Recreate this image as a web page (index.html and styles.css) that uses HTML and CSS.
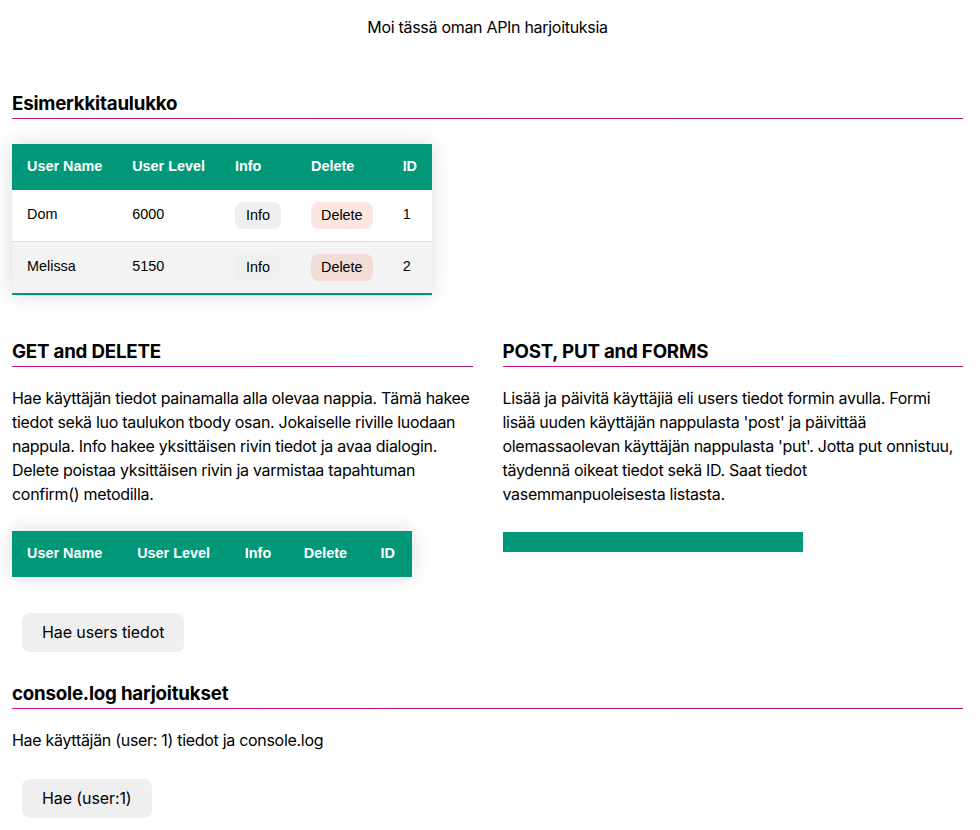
FILE: index.html
```html
<!DOCTYPE html>
<html lang="fi">
<head>
<meta charset="utf-8">
<title>API harjoitukset</title>
<link rel="stylesheet" href="styles.css">
</head>
<body>
<main class="page">
  <header class="intro">
    <p>Moi tässä oman APIn harjoituksia</p>
  </header>

  <section class="block">
    <h3 class="section-title">Esimerkkitaulukko</h3>
    <table class="styled-table">
      <thead>
        <tr><th>User Name</th><th>User Level</th><th>Info</th><th>Delete</th><th>ID</th></tr>
      </thead>
      <tbody>
        <tr>
          <td>Dom</td><td>6000</td>
          <td><button class="btn-small btn-info">Info</button></td>
          <td><button class="btn-small btn-delete">Delete</button></td>
          <td>1</td>
        </tr>
        <tr>
          <td>Melissa</td><td>5150</td>
          <td><button class="btn-small btn-info">Info</button></td>
          <td><button class="btn-small btn-delete">Delete</button></td>
          <td>2</td>
        </tr>
      </tbody>
    </table>
  </section>

  <div class="columns">
    <section class="block">
      <h3 class="section-title">GET and DELETE</h3>
      <p class="text">Hae käyttäjän tiedot painamalla alla olevaa nappia. Tämä hakee tiedot sekä luo taulukon tbody osan. Jokaiselle riville luodaan nappula. Info hakee yksittäisen rivin tiedot ja avaa dialogin. Delete poistaa yksittäisen rivin ja varmistaa tapahtuman confirm() metodilla.</p>
      <table class="styled-table">
        <thead>
          <tr><th>User Name</th><th>User Level</th><th>Info</th><th>Delete</th><th>ID</th></tr>
        </thead>
        <tbody></tbody>
      </table>
      <div class="actions"><button class="btn">Hae users tiedot</button></div>
    </section>
    <section class="block">
      <h3 class="section-title">POST, PUT and FORMS</h3>
      <p class="text">Lisää ja päivitä käyttäjiä eli users tiedot formin avulla. Formi lisää uuden käyttäjän nappulasta 'post' ja päivittää olemassaolevan käyttäjän nappulasta 'put'. Jotta put onnistuu, täydennä oikeat tiedot sekä ID. Saat tiedot vasemmanpuoleisesta listasta.</p>
      <form class="user-form"></form>
    </section>
  </div>

  <section class="block">
    <h3 class="section-title">console.log harjoitukset</h3>
    <p class="text">Hae käyttäjän (user: 1) tiedot ja console.log</p>
    <div class="actions"><button class="btn">Hae (user:1)</button></div>
  </section>
</main>
</body>
</html>
```

FILE: styles.css
```css
* { box-sizing: border-box; }

body {
  margin: 0;
  font-family: Inter, "Liberation Sans", sans-serif;
  font-size: 16px;
  line-height: 1.5;
  letter-spacing: -0.3px;
  color: #000;
  background: #fff;
}

.page {
  margin: 0 17px 0 12px;
  padding-bottom: 20px;
}

.intro {
  text-align: center;
  padding-top: 15px;
  margin-bottom: 51px;
}
.intro p { margin: 0; }

.section-title {
  font-size: 18.72px;
  line-height: 28px;
  font-weight: 700;
  letter-spacing: -0.2px;
  margin: 18.72px 0;
  border-bottom: 1px solid transparent;
  border-image: linear-gradient(90deg, #d0128a, #9c1a6c) 1;
}

.text { margin: 16px 0; }

.columns {
  display: grid;
  grid-template-columns: 1fr 1fr;
  column-gap: 30px;
}

.styled-table {
  border-collapse: collapse;
  margin: 25px 0;
  font-size: 0.9em;
  font-family: "Liberation Sans", Arial, sans-serif;
  letter-spacing: 0;
  min-width: 400px;
  box-shadow: 0 0 20px rgba(0, 0, 0, 0.15);
}
.styled-table thead tr {
  background-color: #009879;
  color: #fff;
  text-align: left;
}
.styled-table th,
.styled-table td {
  padding: 12px 15px;
}
.styled-table tbody tr { border-bottom: 1px solid #dddddd; }
.styled-table tbody tr:nth-of-type(even) { background-color: #f3f3f3; }
.styled-table tbody tr:last-of-type { border-bottom: 2px solid #009879; }

.btn-small {
  font-family: "Liberation Sans", Arial, sans-serif;
  font-size: 14.4px;
  line-height: 17px;
  padding: 5px 10px;
  border: none;
  border-radius: 8px;
  background: #efefef;
  color: #000;
  vertical-align: middle;
}
.btn-info { padding: 5px 11px; }
.btn-delete { background: rgba(240, 128, 100, 0.2); }

.actions { line-height: normal; }

.btn {
  font-family: Inter, "Liberation Sans", sans-serif;
  font-size: 16px;
  line-height: 19px;
  letter-spacing: -0.1px;
  padding: 10px 20px;
  margin: 11px 10px 10px;
  border: none;
  border-radius: 8px;
  background: #efefef;
  color: #000;
}

.user-form {
  width: 300px;
  height: 20px;
  margin: 26px 0 25px;
  background: #009879;
}
```
